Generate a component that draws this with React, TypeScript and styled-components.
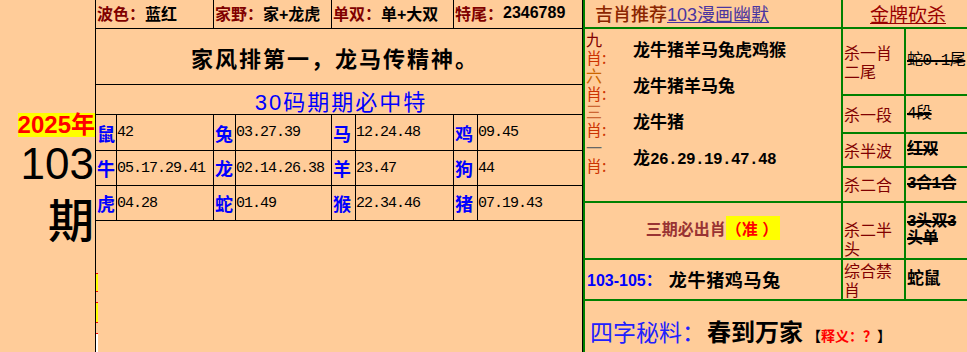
import React from "react";
import styled, { createGlobalStyle } from "styled-components";

const SANS = `"Liberation Sans", "Noto Sans CJK SC", sans-serif`;
const MONO = `"Liberation Mono", "Noto Sans CJK SC", monospace`;

const GlobalStyle = createGlobalStyle`
  html, body {
    margin: 0;
    padding: 0;
    background: #ffcc99;
  }
  body {
    font-family: ${SANS};
  }
`;

const zodiac = [
  ["鼠", "42", "兔", "03.27.39", "马", "12.24.48", "鸡", "09.45"],
  ["牛", "05.17.29.41", "龙", "02.14.26.38", "羊", "23.47", "狗", "44"],
  ["虎", "04.28", "蛇", "01.49", "猴", "22.34.46", "猪", "07.19.43"],
];

const picks = [
  { num: "九", color: "#800000", text: "龙牛猪羊马兔虎鸡猴" },
  { num: "六", color: "#cc6600", text: "龙牛猪羊马兔" },
  { num: "三", color: "#cc6633", text: "龙牛猪" },
  { num: "一", color: "#666666", text: "龙", nums: "26.29.19.47.48" },
];

export default function App() {
  return (
    <>
      <GlobalStyle />
      <Page>
        <Side>
          <Year>2025年</Year>
          <Issue>103</Issue>
          <IssueUnit>期</IssueUnit>
        </Side>

        <Board>
          <InfoRow>
            <InfoCell>
              <Key>波色：</Key>蓝红
            </InfoCell>
            <InfoCell>
              <Key>家野：</Key>家+龙虎
            </InfoCell>
            <InfoCell>
              <Key>单双：</Key>单+大双
            </InfoCell>
            <InfoCell $last>
              <Key>特尾：</Key>2346789
            </InfoCell>
          </InfoRow>
          <Motto>家风排第一，龙马传精神。</Motto>
          <Slogan>30码期期必中特</Slogan>
          <ZodiacGrid>
            {zodiac.map((row, r) =>
              row.map((v, i) =>
                i % 2 === 0 ? (
                  <Animal key={`${r}-${i}`}>{v}</Animal>
                ) : (
                  <Numbers key={`${r}-${i}`} $last={i === 7}>
                    {v}
                  </Numbers>
                )
              )
            )}
          </ZodiacGrid>
          <Ticker>
            <TickerBit $bg="#ffff00" $h={17} />
            <TickerBit $bg="#ffff00" $h={19} />
            <TickerBit $bg="#ffffff" $h={20} />
          </Ticker>
        </Board>

        <Panel>
          <HeadCell>
            <Brown>吉肖推荐</Brown>
            <HeadLink>103漫画幽默</HeadLink>
          </HeadCell>
          <HeadCell $center $span>
            <GoldLink>金牌砍杀</GoldLink>
          </HeadCell>

          <PickList>
            {picks.map((p) => (
              <PickRow key={p.num}>
                <PickLabel>
                  <PickNum $color={p.color}>{p.num}</PickNum>
                  <PickXiao>肖:</PickXiao>
                </PickLabel>
                <PickText>
                  {p.text}
                  {p.nums && <PickNums>{p.nums}</PickNums>}
                </PickText>
              </PickRow>
            ))}
          </PickList>

          <KillLabel>杀一肖二尾</KillLabel>
          <KillValue>蛇0.1尾</KillValue>
          <KillLabel>杀一段</KillLabel>
          <KillValue>4段</KillValue>
          <KillLabel>杀半波</KillLabel>
          <KillValue $bold>红双</KillValue>
          <KillLabel>杀二合</KillLabel>
          <KillValue $bold>3合1合</KillValue>

          <TripleCell>
            <TripleText>三期必出肖</TripleText>
            <Sure>（准 ）</Sure>
          </TripleCell>
          <KillLabel $shift={17}>杀二半头</KillLabel>
          <KillValue $bold>3头双3头单</KillValue>

          <RangeCell>
            <RangeKey>103-105：</RangeKey>
            <RangeText>龙牛猪鸡马兔</RangeText>
          </RangeCell>
          <KillLabel>综合禁肖</KillLabel>
          <KillValue $bold $plain $size={17}>
            蛇鼠
          </KillValue>

          <SecretCell>
            <SecretKey>四字秘料：</SecretKey>
            <SecretText>春到万家</SecretText>
            <Hint>
              【<HintRed>释义：？</HintRed>】
            </Hint>
          </SecretCell>
        </Panel>
      </Page>
    </>
  );
}

const Page = styled.div`
  display: flex;
  width: 967px;
  height: 352px;
  overflow: hidden;
  background: #ffcc99;
`;

const Side = styled.div`
  flex: none;
  width: 95px;
  display: flex;
  flex-direction: column;
  align-items: flex-end;
  padding-top: 113px;
  box-sizing: border-box;
`;

const Year = styled.div`
  background: #ffff00;
  color: #ff0000;
  font-family: ${SANS};
  font-weight: bold;
  font-size: 24px;
  line-height: 24px;
  white-space: nowrap;
`;

const Issue = styled.div`
  margin-top: 5px;
  font-family: "Liberation Sans", sans-serif;
  font-size: 44px;
  line-height: 44px;
  color: #000;
  padding-right: 1px;
`;

const IssueUnit = styled.div`
  margin-top: 8px;
  font-family: "Noto Sans CJK SC", sans-serif;
  font-size: 46px;
  line-height: 46px;
  font-weight: 500;
  color: #000;
  padding-right: 1px;
`;

const Board = styled.div`
  flex: none;
  width: 488px;
  border-left: 1px solid #000;
  border-right: 1px solid #000;
  box-sizing: border-box;
`;

const InfoRow = styled.div`
  display: grid;
  grid-template-columns: 118px 118px 122px 1fr;
  height: 29px;
  border-bottom: 1px solid #000;
  box-sizing: border-box;
`;

const InfoCell = styled.div<{ $last?: boolean }>`
  display: flex;
  align-items: center;
  padding: 0 0 3px 1px;
  border-right: ${(p) => (p.$last ? "none" : "1px solid #000")};
  font-size: 16px;
  font-weight: bold;
  color: #000;
  white-space: nowrap;
  overflow: hidden;
`;

const Key = styled.span`
  color: #800000;
`;

const Motto = styled.div`
  height: 56px;
  border-bottom: 1px solid #000;
  box-sizing: border-box;
  display: flex;
  align-items: center;
  justify-content: center;
  font-family: "Noto Sans CJK SC", sans-serif;
  font-size: 22px;
  letter-spacing: 2px;
  font-weight: bold;
  color: #000;
  padding-right: 8px;
`;

const Slogan = styled.div`
  height: 30px;
  border-bottom: 1px solid #000;
  box-sizing: border-box;
  display: flex;
  align-items: center;
  justify-content: center;
  font-size: 22px;
  letter-spacing: 2px;
  color: #0000ff;
  padding-left: 4px;
`;

const ZodiacGrid = styled.div`
  display: grid;
  grid-template-columns: 21px 97px 22px 96px 24px 98px 24px 1fr;
  grid-template-rows: 36px 35px 35px;
`;

const Animal = styled.div`
  display: flex;
  align-items: center;
  border-right: 1px solid #000;
  border-bottom: 1px solid #000;
  font-family: "Noto Sans CJK SC", sans-serif;
  font-size: 18px;
  font-weight: bold;
  color: #0000ff;
  padding-left: 1px;
  overflow: hidden;
`;

const Numbers = styled.div<{ $last?: boolean }>`
  display: flex;
  align-items: center;
  border-right: ${(p) => (p.$last ? "none" : "1px solid #000")};
  border-bottom: 1px solid #000;
  font-family: ${MONO};
  font-size: 15px;
  letter-spacing: -1px;
  color: #000;
  white-space: nowrap;
`;

const Ticker = styled.div`
  display: flex;
  flex-direction: column;
  gap: 10px;
  width: 2px;
  margin-top: 52px;
`;

const TickerBit = styled.div<{ $bg: string; $h: number }>`
  height: ${(p) => p.$h}px;
  background: ${(p) => p.$bg};
  border-bottom: 1px solid #ff0000;
  border-top: 1px dashed #ff0000;
`;

const Panel = styled.div`
  flex: 1;
  border-left: 2px solid #008000;
  display: grid;
  grid-template-columns: 256px 61px 1fr;
  grid-template-rows: 27px 65px 36px 32px 33px 55px 39px 1fr;
  gap: 2px;
  background: #008000;
  min-width: 0;
`;

const Cell = styled.div`
  background: #ffcc99;
  min-width: 0;
`;

const HeadCell = styled(Cell)<{ $center?: boolean; $span?: boolean }>`
  display: flex;
  align-items: center;
  justify-content: ${(p) => (p.$center ? "center" : "flex-start")};
  padding-left: ${(p) => (p.$center ? "6px" : "10px")};
  padding-bottom: 1px;
  grid-column: ${(p) => (p.$span ? "2 / 4" : "auto")};
  font-size: 18px;
  white-space: nowrap;
`;

const Brown = styled.span`
  color: #8b2500;
  font-weight: 500;
`;

const HeadLink = styled.span`
  color: #4a35a0;
  text-decoration: underline;
`;

const GoldLink = styled.span`
  color: #990000;
  font-size: 19px;
  text-decoration: underline;
`;

const PickList = styled(Cell)`
  grid-column: 1;
  grid-row: 2 / 6;
  display: flex;
  flex-direction: column;
  padding-top: 1px;
`;

const PickRow = styled.div`
  display: flex;
  align-items: center;
  height: 36px;
`;

const PickLabel = styled.div`
  flex: none;
  width: 18px;
  margin-left: 1px;
  font-family: "Noto Sans CJK SC", sans-serif;
  font-size: 16px;
  line-height: 18px;
  white-space: nowrap;
`;

const PickNum = styled.div<{ $color: string }>`
  height: 18px;
  color: ${(p) => p.$color};
`;

const PickXiao = styled.div`
  height: 18px;
  color: #cc3300;
`;

const PickText = styled.div`
  margin-left: 29px;
  font-family: "Noto Sans CJK SC", sans-serif;
  font-size: 17px;
  font-weight: bold;
  color: #000;
  white-space: nowrap;
`;

const PickNums = styled.span`
  font-family: ${MONO};
  font-size: 16px;
  letter-spacing: -0.6px;
`;

const KillLabel = styled(Cell)<{ $shift?: number }>`
  display: flex;
  align-items: center;
  padding: ${(p) => (p.$shift ? `${p.$shift}px 0 0 1px` : "0 0 0 1px")};
  font-family: "Noto Sans CJK SC", sans-serif;
  font-size: 16px;
  line-height: 19px;
  color: #800000;
`;

const KillValue = styled(Cell)<{ $bold?: boolean; $plain?: boolean; $size?: number }>`
  display: flex;
  align-items: center;
  padding-left: 1px;
  font-family: ${MONO};
  font-size: ${(p) => p.$size ?? 16}px;
  letter-spacing: -0.5px;
  line-height: 17px;
  font-weight: ${(p) => (p.$bold ? "bold" : "normal")};
  color: #000;
  text-decoration: ${(p) => (p.$plain ? "none" : "line-through")};
  text-decoration-thickness: 1.5px;
`;

const TripleCell = styled(Cell)`
  grid-column: 1;
  display: flex;
  align-items: center;
  justify-content: center;
  padding-bottom: 6px;
  font-size: 16px;
  font-weight: bold;
  white-space: nowrap;
`;

const TripleText = styled.span`
  color: #993333;
`;

const Sure = styled.span`
  background: #ffff00;
  color: #ff0000;
  padding-right: 2px;
`;

const RangeCell = styled(Cell)`
  grid-column: 1;
  display: flex;
  align-items: center;
  padding: 0 0 2px 2px;
  white-space: nowrap;
`;

const RangeKey = styled.span`
  color: #0000ff;
  font-size: 16px;
  font-weight: bold;
`;

const RangeText = styled.span`
  margin-left: 7px;
  font-family: "Noto Sans CJK SC", sans-serif;
  font-size: 18px;
  letter-spacing: 0.7px;
  font-weight: bold;
  color: #000;
`;

const SecretCell = styled(Cell)`
  grid-column: 1 / 4;
  display: flex;
  align-items: baseline;
  padding: 12px 0 0 5px;
  white-space: nowrap;
`;

const SecretKey = styled.span`
  font-family: "Noto Sans CJK SC", sans-serif;
  font-size: 23px;
  color: #2020ff;
`;

const SecretText = styled.span`
  margin-left: 2px;
  font-family: "Noto Sans CJK SC", sans-serif;
  font-size: 24px;
  font-weight: bold;
  color: #000;
`;

const Hint = styled.span`
  margin-left: 4px;
  font-family: "Noto Sans CJK SC", sans-serif;
  font-size: 14px;
  font-weight: bold;
  color: #000;
`;

const HintRed = styled.span`
  color: #ff0000;
`;
